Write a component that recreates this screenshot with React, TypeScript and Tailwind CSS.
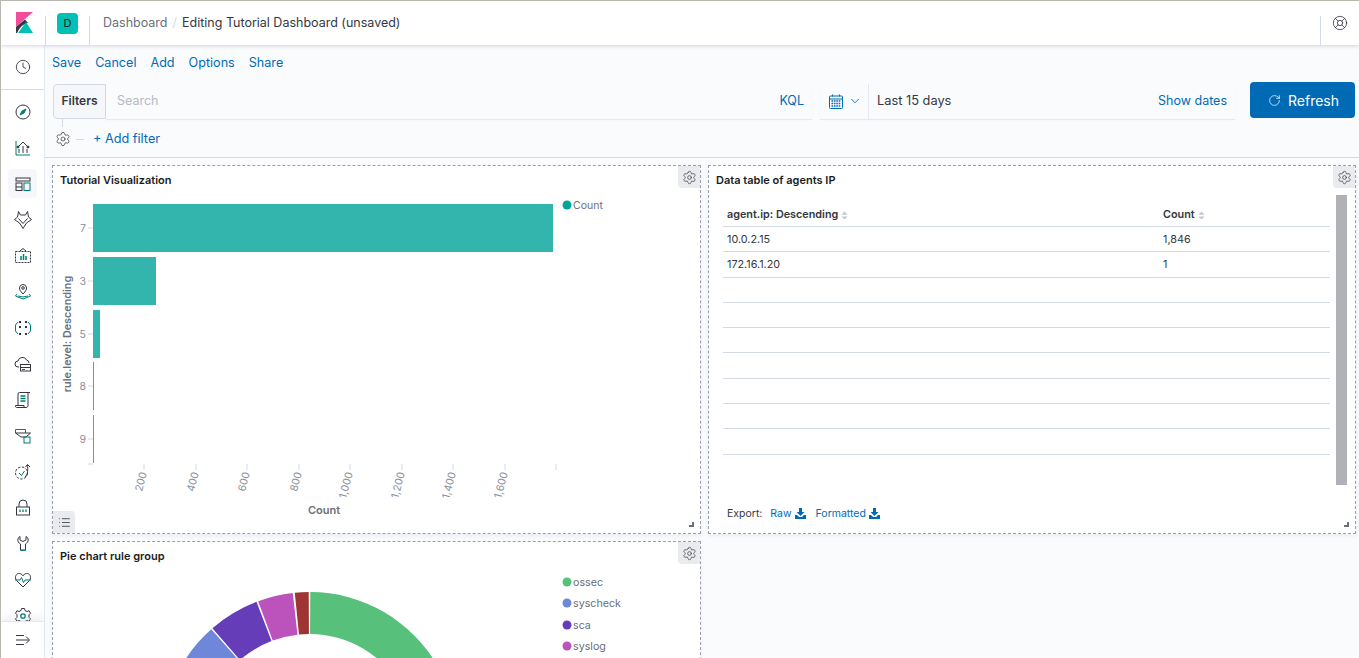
import React from "react";
import { ChevronDown, Clock, LifeBuoy, List, RotateCw, Settings } from "lucide-react";

const dark = "#343741";
const teal = "#017d73";

// Two-tone nav icons, all on an 18x18 box
const Glyph = ({ children }: { children: React.ReactNode }) => (
  <svg width="18" height="18" viewBox="0 0 18 18" fill="none" stroke={dark} strokeWidth="1">
    {children}
  </svg>
);

const navIcons: React.ReactNode[] = [
  <Glyph>
    <circle cx="9" cy="9" r="7" />
    <path d="M12 6 L10 10 L6 12 L8 8 Z" fill={teal} stroke={teal} />
  </Glyph>,
  <Glyph>
    <path d="M2 2 V16 H16" stroke={teal} />
    <path d="M4 8 L9 3 L14 8 M5 14 V10 M9 14 V7 M13 14 V10" />
    <circle cx="4" cy="8" r="1" fill={dark} />
    <circle cx="14" cy="8" r="1" fill={dark} />
  </Glyph>,
  <Glyph>
    <rect x="2" y="3" width="14" height="3" />
    <rect x="2" y="8" width="6" height="7.5" />
    <rect x="10" y="8" width="6" height="7.5" stroke={teal} />
    <path d="M2 12 H8" />
  </Glyph>,
  <Glyph>
    <path d="M4.5 0.5 L6.5 4 H11.5 L13.5 0.5 L14.5 6 L17.5 8.5 L12.5 12 L9 17.5 L5.5 12 L0.5 8.5 L3.5 6 Z" />
    <path d="M4.5 7.5 L9 12.5 L13.5 7.5" stroke={dark} />
  </Glyph>,
  <Glyph>
    <rect x="1.5" y="4.5" width="15" height="11" strokeDasharray="2 1" />
    <path d="M6 4 L9 1.5 L12 4" />
    <path d="M7 13 V9 M9.5 13 V7 M12 13 V9" stroke={teal} strokeWidth="1.5" />
  </Glyph>,
  <Glyph>
    <path d="M9 11 C6 8 5.5 6.5 5.5 5 A3.5 3.5 0 0 1 12.5 5 C12.5 6.5 12 8 9 11 Z" />
    <circle cx="9" cy="5" r="1.3" />
    <path d="M3 11 L1.5 13 L5 14.5 L9 16 L13 14.5 L16.5 13 L15 11 M4 13 Q9 15 14 13" stroke={teal} />
  </Glyph>,
  <Glyph>
    <path d="M4 3 L1.5 6 V12 L4 15 M14 3 L16.5 6 V12 L14 15" stroke={teal} />
    <g fill={dark} stroke="none">
      <rect x="5" y="2" width="2" height="2" />
      <rect x="11" y="2" width="2" height="2" />
      <rect x="5" y="7" width="2" height="2" />
      <rect x="11" y="7" width="2" height="2" />
      <rect x="5" y="14" width="2" height="2" />
      <rect x="11" y="14" width="2" height="2" />
    </g>
  </Glyph>,
  <Glyph>
    <path d="M5 12 H4 A3 3 0 0 1 4 6 A4.5 4.5 0 0 1 12.5 5 A3 3 0 0 1 15 8" />
    <rect x="6.5" y="9.5" width="10" height="6.5" />
    <path d="M6.5 12.5 H16.5" />
    <path d="M8 14.5 H11" stroke={teal} />
  </Glyph>,
  <Glyph>
    <path d="M4 14 V3 A1.5 1.5 0 0 1 5.5 1.5 H16 M14 1.5 V14 A2 2 0 0 1 12 16.5 H2.5 A1.5 1.5 0 0 1 1.5 14.5 H10 V16" />
    <path d="M6.5 5 H11.5 M6.5 7.5 H11.5 M6.5 10 H11.5" stroke={teal} strokeWidth="1.3" />
  </Glyph>,
  <Glyph>
    <path d="M1.5 6 V2.5 H11.5 V6" stroke={teal} />
    <path d="M1.5 6 H16.5 L12 10 H7 Z" />
    <rect x="10" y="10" width="6" height="6" stroke={teal} />
  </Glyph>,
  <Glyph>
    <circle cx="7.5" cy="10" r="6" strokeDasharray="2.5 1.5" />
    <path d="M5 10 L7.5 12.5 L10.5 8" stroke={teal} />
    <path d="M11 14 C14 12 14 6 13.5 2 M11.5 4 L13.5 1.5 L16 4" />
  </Glyph>,
  <Glyph>
    <path d="M5 8 V5 A4 4 0 0 1 13 5 V8" />
    <rect x="2.5" y="8" width="13" height="8" />
    <path d="M6 10.5 V13 M9 10.5 V13 M12 10.5 V13" stroke={teal} strokeWidth="1.3" />
  </Glyph>,
  <Glyph>
    <path d="M6 1.5 V5 L9 6.5 L12 5 V1.5 C15 3 15 7 11.5 9 V15 H6.5 V9 C3 7 3 3 6 1.5 Z" />
    <path d="M6.5 15.5 H11.5" stroke={teal} />
  </Glyph>,
  <Glyph>
    <path d="M9 16 L2.5 9.5 C0 6 2.5 2 5.5 2.5 C7.5 2.7 8.5 4 9 5 C9.5 4 10.5 2.7 12.5 2.5 C15.5 2 18 6 15.5 9.5 Z" />
    <path d="M1 9 H6 L7.5 6.5 L9.5 11.5 L11 9 H17" stroke={teal} />
  </Glyph>,
  <Glyph>
    <path d="M7.5 1.5 H10.5 L11 3.5 L13 4.5 L15 3.7 L16.5 6.2 L15 7.7 V10.3 L16.5 11.8 L15 14.3 L13 13.5 L11 14.5 L10.5 16.5 H7.5 L7 14.5 L5 13.5 L3 14.3 L1.5 11.8 L3 10.3 V7.7 L1.5 6.2 L3 3.7 L5 4.5 L7 3.5 Z" />
    <circle cx="9" cy="9" r="2.2" stroke={teal} strokeWidth="1.3" />
  </Glyph>,
];

const SideNav = () => (
  <nav className="flex w-[44px] shrink-0 flex-col bg-white border-r border-[#e4e8f0]">
    <div className="flex h-[45px] shrink-0 items-center justify-center border-b border-[#d3dae6]">
      <Clock size={16} strokeWidth={1.3} color={dark} />
    </div>
    <div className="flex flex-1 flex-col items-center overflow-hidden pt-[7px]">
      {navIcons.map((icon, i) => (
        <div
          key={i}
          className={`mb-[7px] flex h-[29px] w-[29px] shrink-0 items-center justify-center rounded ${
            i === 2 ? "bg-[#f5f7fa]" : ""
          }`}
        >
          {icon}
        </div>
      ))}
    </div>
    <div className="flex h-[37px] shrink-0 items-center justify-center border-t border-[#e4e8f0] shadow-[0_-4px_6px_rgba(152,162,179,0.15)]">
      <svg width="16" height="12" viewBox="0 0 16 12" fill="none" stroke={dark} strokeWidth="1">
        <path d="M1 1.5 H9 M1 6 H14 M1 10.5 H9 M11 2.5 L14.5 6 L11 9.5" />
      </svg>
    </div>
  </nav>
);

const Header = () => (
  <header className="relative z-10 flex h-[44px] shrink-0 bg-white shadow-[0_1px_4px_rgba(152,162,179,0.45)]">
    <div className="flex w-[44px] items-center justify-center pl-[2px] pb-[2px]">
      <svg width="17" height="21" viewBox="0 0 17 21">
        <path d="M0 0 H17 L0 15 Z" fill="#f04e98" />
        <path d="M0 15 L9 7.5 L12 11 Q5 12 1 21 H0 Z" fill={dark} />
        <path d="M2 21 L10 10 L17 21 Z" fill="#00bfb3" />
      </svg>
    </div>
    <div className="mt-[15px] flex h-[29px] w-[44px] justify-center border-l border-[#d3dae6]">
      <div className="-mt-[3px] flex h-[21px] w-[21px] items-center justify-center rounded bg-[#00bfb3] text-[11px] text-[#1a1c21]">
        D
      </div>
    </div>
    <div className="mt-[15px] flex h-[29px] flex-1 border-l border-[#d3dae6] pl-[13px]">
      <div className="-mt-[1px] flex h-[16px] items-center gap-[5px] text-[12.5px] leading-[16px]">
        <span className="text-[#69707d]">Dashboard</span>
        <span className="text-[#d3dae6]">/</span>
        <span className="text-[#343741]">Editing Tutorial Dashboard (unsaved)</span>
      </div>
    </div>
    <div className="mt-[15px] flex h-[29px] w-[39px] justify-center border-l border-[#d3dae6]">
      <LifeBuoy size={16} strokeWidth={1.2} color={dark} className="-mt-[1px]" />
    </div>
  </header>
);

const CalendarIcon = () => (
  <svg width="14" height="15" viewBox="0 0 14 15" fill="none" stroke="#006bb4" strokeWidth="1">
    <rect x="0.5" y="2" width="13" height="12.5" rx="1" />
    <path d="M0.5 5 H13.5 M3.5 0.5 V2.5 M10.5 0.5 V2.5" />
    <path d="M2.5 7 H11.5 M2.5 9.5 H11.5 M2.5 12 H11.5" strokeWidth="1.3" strokeDasharray="1.6 0.8" />
  </svg>
);

const TopBar = () => (
  <div className="h-[113px] shrink-0 border-b border-[#d3dae6] bg-[#fafbfd]">
    <div className="flex h-[27px] items-end gap-[14px] pl-[7px] text-[12.6px] leading-[18px] text-[#006bb4]">
      <span>Save</span>
      <span>Cancel</span>
      <span>Add</span>
      <span>Options</span>
      <span>Share</span>
    </div>
    <div className="relative mt-[2px] box-content flex h-[36px] items-center pl-[8px] pr-[4px] pt-[9px]">
      <div className="flex h-[35px] w-[53px] items-center justify-center rounded-l border border-[#d3dae6] bg-[#f5f7fa] text-[12px] font-semibold text-[#343741]">
        Filters
      </div>
      <div className="flex h-[35px] w-[706px] items-center justify-between bg-[#fafbfd] pl-[11px] pr-[8px] text-[12.5px] shadow-[0_1px_1px_rgba(152,162,179,0.2)]">
        <span className="text-[#b5bac4]">Search</span>
        <span className="text-[#006bb4]">KQL</span>
      </div>
      <div className="ml-[8px] flex h-[35px] w-[415px] items-center bg-[#fafbfd] text-[12.5px] shadow-[0_1px_1px_rgba(152,162,179,0.2)]">
        <div className="flex h-full w-[49px] items-center gap-[5px] border-r border-[#e4e8f0] pl-[9px] text-[#006bb4]">
          <CalendarIcon />
          <ChevronDown size={14} strokeWidth={1.5} />
        </div>
        <span className="pl-[8px] text-[12.8px] text-[#343741]">Last 15 days</span>
        <span className="ml-auto pr-[8px] text-[#006bb4]">Show dates</span>
      </div>
      <button className="ml-[15px] -mt-[2px] flex h-[36px] w-[105px] items-center justify-center gap-[7px] rounded bg-[#006bb4] pl-[2px] text-[14px] text-white">
        <RotateCw size={13} strokeWidth={1.3} />
        Refresh
      </button>
    </div>
    <div className="ml-[17px] h-[8px] w-px bg-[#d3dae6] -mb-[8px]" />
    <div className="mt-[6px] flex h-[28px] items-center pl-[10px]">
      <Settings size={16} strokeWidth={1.1} color={dark} />
      <div className="ml-[5px] h-px w-[8px] bg-[#d3dae6]" />
      <span className="ml-[9px] text-[12.7px] text-[#006bb4]">+ Add filter</span>
    </div>
  </div>
);

const Panel = ({ className, children }: { className?: string; children: React.ReactNode }) => (
  <section
    className={`relative border border-dashed border-[#9a9eb0] bg-white shadow-[0_2px_4px_rgba(152,162,179,0.15)] ${className ?? ""}`}
  >
    <button className="absolute right-0 top-0 flex h-[22px] w-[22px] items-center justify-center rounded-bl bg-[#e9ebee]">
      <Settings size={15} strokeWidth={1.1} color={dark} />
    </button>
    {children}
  </section>
);

const ResizeCorner = () => (
  <div className="absolute bottom-[6px] right-[6px] h-[5px] w-[5px] border-b-2 border-r-2 border-[#69707d]" />
);

const xTicks = [
  ["200", 144],
  ["400", 196],
  ["600", 247],
  ["800", 299],
  ["1,000", 350],
  ["1,200", 402],
  ["1,400", 453],
  ["1,600", 505],
] as const;

const bars = [
  { label: "7", y: 204, w: 460 },
  { label: "3", y: 257, w: 63 },
  { label: "5", y: 310, w: 7 },
  { label: "8", y: 362, w: 1 },
  { label: "9", y: 415, w: 1 },
];

const TutorialChart = () => (
  <svg viewBox="53 196 647 325" className="block h-[325px] w-[647px]">
    {bars.map((b) => (
      <g key={b.label}>
        <rect x={93} y={b.y} width={b.w} height={48} fill="#33b5ad" />
        <line x1={88} x2={93} y1={b.y + 24} y2={b.y + 24} stroke="#d3dae6" />
        <text x={86} y={b.y + 28} textAnchor="end" fontSize="10.5" fill="#8a8f9c">
          {b.label}
        </text>
      </g>
    ))}
    <line x1={88} x2={93} y1={464} y2={464} stroke="#d3dae6" />
    {xTicks.map(([label, x]) => (
      <g key={label}>
        <line x1={x} x2={x} y1={464} y2={470} stroke="#d3dae6" />
        <text
          transform={`translate(${x + 3} 473) rotate(-75)`}
          textAnchor="end"
          fontSize="10.5"
          fill="#8a8f9c"
        >
          {label}
        </text>
      </g>
    ))}
    <line x1={556} x2={556} y1={464} y2={470} stroke="#d3dae6" />
    <text
      transform="translate(71 334) rotate(-90)"
      textAnchor="middle"
      fontSize="10.8"
      fontWeight="600"
      fill="#69707d"
    >
      rule.level: Descending
    </text>
    <text x={324} y={514} textAnchor="middle" fontSize="11" fontWeight="600" fill="#69707d">
      Count
    </text>
    <circle cx={567} cy={205} r={4.5} fill="#00a69b" />
    <text x={573} y={209} fontSize="10.5" fill="#69707d">
      Count
    </text>
  </svg>
);

// Donut slices, degrees clockwise from the top
const polar = (r: number, deg: number) => {
  const a = (deg * Math.PI) / 180;
  return `${309.5 + r * Math.sin(a)} ${740 + -r * Math.cos(a)}`;
};
const slice = (from: number, to: number) =>
  `M${polar(148, from)} A148 148 0 0 1 ${polar(148, to)} L${polar(106, to)} A106 106 0 0 0 ${polar(106, from)} Z`;

const slices = [
  { from: 0.3, to: 120, color: "#57c17b" },
  { from: -70, to: -41.6, color: "#6f87d8" },
  { from: -41, to: -21, color: "#663db8" },
  { from: -20.3, to: -6.5, color: "#bc52bc" },
  { from: -5.7, to: -0.3, color: "#9e3533" },
];

const legend = [
  { name: "ossec", color: "#57c17b", y: 582 },
  { name: "syscheck", color: "#6f87d8", y: 603 },
  { name: "sca", color: "#663db8", y: 625 },
  { name: "syslog", color: "#bc52bc", y: 646 },
];

const PieChart = () => (
  <svg viewBox="53 572 647 120" className="block h-[120px] w-[647px]">
    {slices.map((s) => (
      <path key={s.color} d={slice(s.from, s.to)} fill={s.color} />
    ))}
    {legend.map((l) => (
      <g key={l.name}>
        <circle cx={567} cy={l.y} r={4.5} fill={l.color} />
        <text x={573} y={l.y + 4} fontSize="10.7" fill="#69707d">
          {l.name}
        </text>
      </g>
    ))}
  </svg>
);

const rows = [
  ["10.0.2.15", "1,846"],
  ["172.16.1.20", "1"],
  ["", ""],
  ["", ""],
  ["", ""],
  ["", ""],
  ["", ""],
  ["", ""],
  ["", ""],
];

const SortHint = () => (
  <svg width="7" height="9" viewBox="0 0 8 10" fill="#c2c6d0" className="ml-[3px]">
    <path d="M4 0.5 L7.5 4 H0.5 Z M4 9.5 L0.5 6 H7.5 Z" />
  </svg>
);

const DownloadIcon = () => (
  <svg width="11" height="11" viewBox="0 0 11 11" fill="#006bb4">
    <path d="M4 0 H7 V4 H9.5 L5.5 8 L1.5 4 H4 Z M0 7 H2 L4 9 H7 L9 7 H11 V11 H0 Z" />
  </svg>
);

const AgentsTable = () => (
  <div className="flex w-[607px] box-content flex-col pl-[14px]">
    <div className="grid h-[28px] grid-cols-[436px_1fr] items-center border-b border-[#d3dae6] px-[4px] pt-[5px] text-[10.8px] font-semibold text-[#343741]">
      <span className="flex items-center">
        agent.ip: Descending
        <SortHint />
      </span>
      <span className="flex items-center">
        Count
        <SortHint />
      </span>
    </div>
    {rows.map((r, i) => (
      <div
        key={i}
        className="grid h-[25.3px] shrink-0 grid-cols-[436px_1fr] items-center border-b border-[#d3dae6] px-[4px] pt-[2px] text-[10.8px] text-[#343741]"
      >
        <span>{r[0]}</span>
        <span>{r[1]}</span>
      </div>
    ))}
    <div className="mt-[51px] flex items-center px-[4px] text-[10.5px] text-[#343741]">
      <span>Export:</span>
      <span className="ml-[8px] flex items-center gap-[3px] text-[#006bb4]">
        Raw <DownloadIcon />
      </span>
      <span className="ml-[10px] flex items-center gap-[3px] text-[#006bb4]">
        Formatted <DownloadIcon />
      </span>
    </div>
  </div>
);

export default function App() {
  return (
    <div className="flex h-[658px] w-[1359px] flex-col overflow-hidden border-l border-t border-[#b8b8b0] bg-white [font-family:Inter,Arial]">
      <Header />
      <div className="flex min-h-0 flex-1">
        <SideNav />
        <main className="flex min-w-0 flex-1 flex-col bg-[#fafbfd]">
          <TopBar />
          <div className="grid grid-cols-[649px_648px] gap-[7px] pl-[7px] pt-[7px]">
            <Panel className="h-[369px]">
              <h3 className="pl-[7px] pt-[7px] text-[11px] font-semibold leading-[15px] text-[#1a1c21]">
                Tutorial Visualization
              </h3>
              <div className="mt-[8px]">
                <TutorialChart />
              </div>
              <button className="absolute bottom-0 left-0 flex h-[22px] w-[22px] items-center justify-center rounded-tr bg-[#e9ebee]">
                <List size={13} strokeWidth={1.5} color={dark} />
              </button>
              <ResizeCorner />
            </Panel>
            <Panel className="flex h-[369px] flex-col">
              <h3 className="pl-[7px] pt-[7px] text-[11px] font-semibold leading-[15px] text-[#1a1c21]">
                Data table of agents IP
              </h3>
              <div className="absolute right-[8px] top-[29px] h-[290px] w-[11px] bg-[#b0b2b8]" />
              <div className="mt-[11px] flex min-h-0 flex-1">
                <AgentsTable />
              </div>
              <ResizeCorner />
            </Panel>
            <Panel className="h-[200px]">
              <h3 className="pl-[7px] pt-[7px] text-[11px] font-semibold leading-[15px] text-[#1a1c21]">
                Pie chart rule group
              </h3>
              <div className="mt-[8px]">
                <PieChart />
              </div>
            </Panel>
          </div>
        </main>
      </div>
    </div>
  );
}
